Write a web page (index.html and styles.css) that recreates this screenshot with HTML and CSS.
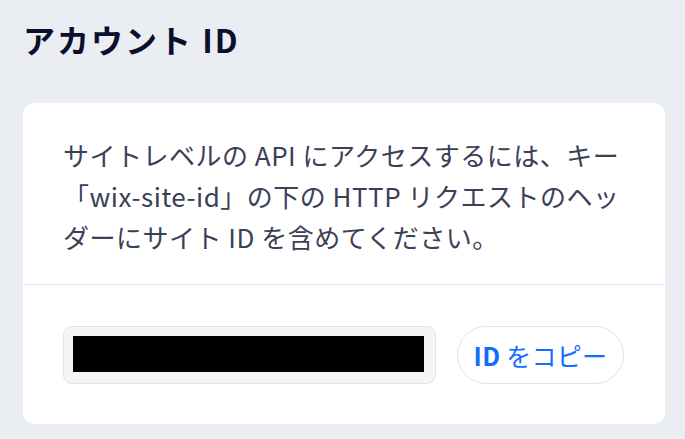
FILE: index.html
```html
<!DOCTYPE html>
<html lang="ja">
<head>
<meta charset="utf-8">
<link rel="stylesheet" href="styles.css">
</head>
<body>
<main class="page">
  <h1 class="title">アカウント ID</h1>
  <section class="card">
    <div class="card-body">
      <p class="desc">サイトレベルの API にアクセスするには、キー「wix-site-id」の下の HTTP リクエストのヘッダーにサイト ID を含めてください。</p>
    </div>
    <div class="card-footer">
      <div class="id-field"><div class="redacted"></div></div>
      <button class="copy-btn" type="button"><span class="latin">ID</span> をコピー</button>
    </div>
  </section>
</main>
</body>
</html>
```

FILE: styles.css
```css
html, body {
  margin: 0;
  padding: 0;
}
body {
  background: #eaedf2;
  font-family: "Noto Sans CJK JP", "Noto Sans", sans-serif;
  width: 685px;
  height: 439px;
  overflow: hidden;
}
.page {
  padding: 16px 20px 0 23px;
}
.title {
  margin: 0 0 0 0;
  font-size: 32px;
  line-height: 46px;
  font-weight: 700;
  letter-spacing: 2px;
  color: #0c0f2c;
}
.card {
  margin-top: 41px;
  width: 642px;
  background: #ffffff;
  border-radius: 12px;
}
.card-body {
  padding: 31px 36px 27px 40px;
  border-bottom: 1px solid #dfe3ea;
}
.desc {
  margin: 0;
  width: 566px;
  font-size: 26px;
  line-height: 41px;
  letter-spacing: 0.5px;
  color: #3b4057;
}
.card-footer {
  display: flex;
  align-items: center;
  gap: 21px;
  padding: 41px 40px 40px 40px;
}
.id-field {
  box-sizing: border-box;
  width: 373px;
  height: 58px;
  background: #f5f5f6;
  border: 1px solid #e2e4ea;
  border-radius: 9px;
  padding: 9px 12px 0 9px;
}
.redacted {
  width: 351px;
  height: 36px;
  background: #000000;
}
.copy-btn {
  box-sizing: border-box;
  width: 167px;
  height: 58px;
  border: 1px solid #d6e4fb;
  border-radius: 29px;
  background: #ffffff;
  color: #116dff;
  font-family: "Noto Sans CJK JP", "Noto Sans", sans-serif;
  font-size: 25px;
  letter-spacing: 0.3px;
  padding: 0;
}
.latin {
  font-weight: 600;
}
```
